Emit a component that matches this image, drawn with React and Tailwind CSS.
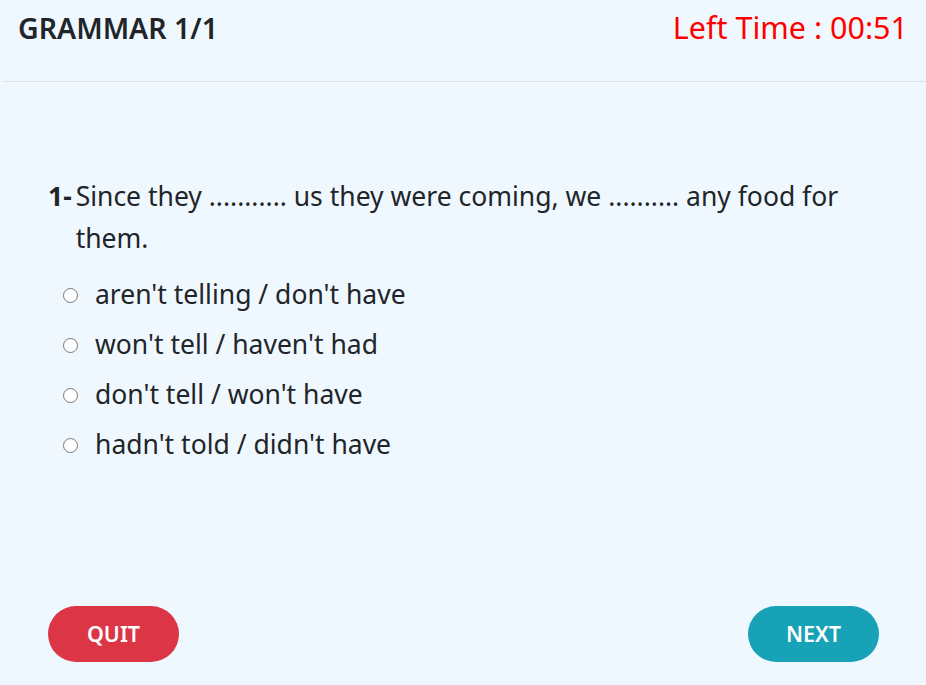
import React, { useState } from 'react'

const options = [
  "aren't telling / don't have",
  "won't tell / haven't had",
  "don't tell / won't have",
  "hadn't told / didn't have",
]

export default function App() {
  const [picked, setPicked] = useState(null)

  return (
    <div
      className="flex h-[685px] w-full flex-col bg-[#f0f8ff] text-[#212529]"
      style={{ fontFamily: '"Noto Sans", "Open Sans", sans-serif' }}
    >
      {/* header */}
      <div className="ml-[3px] flex h-[82px] items-start justify-between border-b border-[#dee2e6] pl-[15px] pr-[18px] pt-2">
        <div className="flex h-10 items-center text-[28.5px] font-semibold">GRAMMAR 1/1</div>
        <div className="flex h-10 items-center text-[30.5px] text-[#ff0000]">Left Time : 00:51</div>
      </div>

      {/* question */}
      <div className="flex-1 px-12 pt-[93px]">
        <div className="flex text-[26.5px] leading-[42px]">
          <span className="pr-1 font-bold">1-</span>
          <span>Since they ........... us they were coming, we .......... any food for them.</span>
        </div>

        <div className="mt-[11px] flex flex-col">
          {options.map((opt, i) => (
            <label key={i} className="flex h-[50px] cursor-pointer items-center pl-[15px] text-[26.5px]">
              <input
                type="radio"
                name="q1"
                checked={picked === i}
                onChange={() => setPicked(i)}
                className="h-[15px] w-[15px] accent-[#0d6efd]"
              />
              <span className="ml-[17px]">{opt}</span>
            </label>
          ))}
        </div>
      </div>

      {/* footer buttons */}
      <div className="flex items-center justify-between pb-[23px] pl-12 pr-[47px]">
        <button className="h-[56px] w-[131px] rounded-full bg-[#dc3545] text-[21.5px] font-semibold text-white">
          QUIT
        </button>
        <button className="h-[56px] w-[131px] rounded-full bg-[#17a2b8] text-[21.5px] font-semibold text-white">
          NEXT
        </button>
      </div>
    </div>
  )
}
